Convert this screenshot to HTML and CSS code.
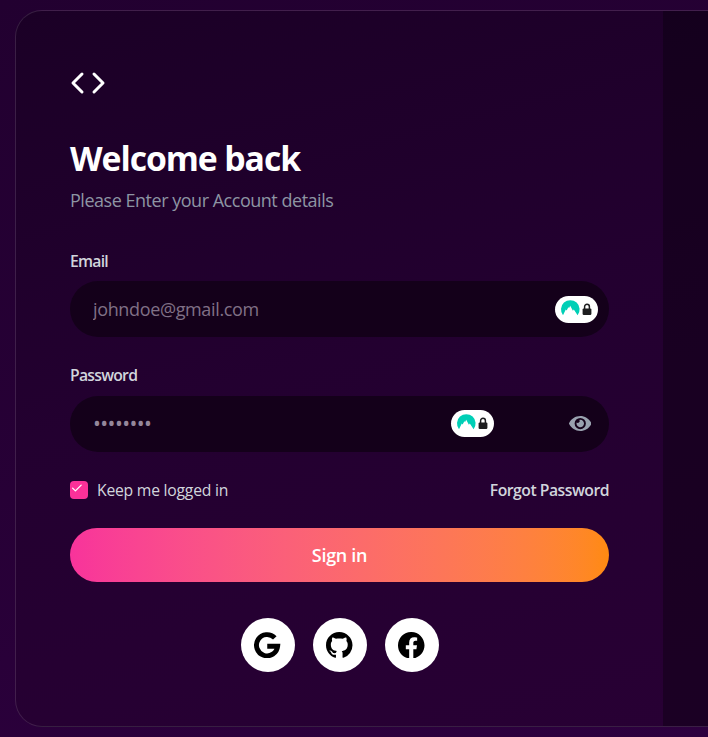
FILE: index.html
```html
<!DOCTYPE html>
<html lang="en">
<head>
<meta charset="utf-8">
<title>Sign in</title>
<link rel="stylesheet" href="styles.css">
</head>
<body>
<svg class="defs" aria-hidden="true">
  <symbol id="vault" viewBox="0 0 43 27">
    <path fill="#00cfb6" d="M8 19.2A9.3 9.3 0 1 1 22.6 19.2L18.8 13.4L17.9 14.8L15.2 9.8L14.1 12L13.4 11.2L11.6 14.4L10.8 13.6Z"/>
    <path fill="none" stroke="#1d1d1f" stroke-width="1.5" d="M29.6 13v-2.3a2.4 2.4 0 0 1 4.8 0V13"/>
    <rect x="27.6" y="12.4" width="8.8" height="6.6" rx="1.2" fill="#1d1d1f"/>
  </symbol>
</svg>
<main class="card">
  <section class="panel">
    <svg class="logo" viewBox="0 0 24 24" fill="none" stroke="#fff" stroke-width="2" stroke-linecap="round" stroke-linejoin="round"><path d="m8 6-6 6 6 6M16 6l6 6-6 6"/></svg>
    <h1 class="title">Welcome back</h1>
    <p class="subtitle">Please Enter your Account details</p>
    <form class="form">
      <label class="label" for="email">Email</label>
      <div class="field">
        <input class="input" id="email" type="email" placeholder="johndoe@gmail.com">
        <svg class="vault vault-email"><use href="#vault"/></svg>
      </div>
      <label class="label" for="password">Password</label>
      <div class="field">
        <input class="input input-dots" id="password" type="text" placeholder="••••••••">
        <svg class="vault vault-password"><use href="#vault"/></svg>
        <svg class="eye" viewBox="0 64 576 384" fill="#99a1af"><path d="M572.52 241.4C518.29 135.59 410.93 64 288 64S57.68 135.64 3.48 241.41a32.35 32.35 0 0 0 0 29.19C57.71 376.41 165.07 448 288 448s230.32-71.64 284.52-177.41a32.35 32.35 0 0 0 0-29.19zM288 400a144 144 0 1 1 144-144 143.93 143.93 0 0 1-144 144zm0-240a95.31 95.31 0 0 0-25.18 3.79 47.85 47.85 0 0 1-66.9 66.9A95.78 95.78 0 1 0 288 160z"/></svg>
      </div>
      <div class="options">
        <div class="keep">
          <span class="check"><svg viewBox="0 0 18 18" fill="none" stroke="#fff" stroke-width="1.3" stroke-linecap="round" stroke-linejoin="round"><path d="m2.6 7.1 2.8 2.8 5.8-5.8"/></svg></span>
          <span class="keep-text">Keep me logged in</span>
        </div>
        <a class="forgot">Forgot Password</a>
      </div>
      <button class="submit" type="button">Sign in</button>
    </form>
    <div class="social">
      <a class="circle"><svg viewBox="0 0 26 26"><path d="M20.4 5.8A10.4 10.4 0 1 0 23.2 14H13" fill="none" stroke="#000" stroke-width="4.8"/></svg></a>
      <a class="circle"><svg viewBox="0 0 16 16"><path d="M8 0C3.58 0 0 3.58 0 8c0 3.54 2.29 6.53 5.47 7.59.4.07.55-.17.55-.38 0-.19-.01-.82-.01-1.49-2.01.37-2.53-.49-2.69-.94-.09-.23-.48-.94-.82-1.13-.28-.15-.68-.52-.01-.53.63-.01 1.08.58 1.23.82.72 1.21 1.87.87 2.33.66.07-.52.28-.87.51-1.07-1.78-.2-3.64-.89-3.64-3.95 0-.87.31-1.59.82-2.15-.08-.2-.36-1.02.08-2.12 0 0 .67-.21 2.2.82.64-.18 1.32-.27 2-.27s1.36.09 2 .27c1.53-1.04 2.2-.82 2.2-.82.44 1.1.16 1.92.08 2.12.51.56.82 1.27.82 2.15 0 3.07-1.87 3.75-3.65 3.95.29.25.54.73.54 1.48 0 1.07-.01 1.93-.01 2.2 0 .21.15.46.55.38A8.01 8.01 0 0 0 16 8c0-4.42-3.58-8-8-8"/></svg></a>
      <a class="circle"><svg viewBox="0 0 16 16"><path d="M16 8.049c0-4.446-3.582-8.05-8-8.05C3.58 0-.002 3.603-.002 8.05c0 4.017 2.926 7.347 6.75 7.951v-5.625h-2.03V8.05H6.75V6.275c0-2.017 1.195-3.131 3.022-3.131.876 0 1.791.157 1.791.157v1.98h-1.009c-.993 0-1.303.621-1.303 1.258v1.51h2.218l-.354 2.326H9.25V16c3.824-.604 6.75-3.934 6.75-7.951"/></svg></a>
    </div>
  </section>
  <aside class="side"></aside>
</main>
</body>
</html>
```

FILE: styles.css
```css
* { box-sizing: border-box; margin: 0; padding: 0; }
html, body { height: 737px; overflow: hidden; }
body {
  padding: 10px 0 0 15px;
  font-family: "Open Sans", "Noto Sans", sans-serif;
  background: linear-gradient(160deg, #220030 0%, #270036 50%, #2d003f 100%);
}
.defs { position: absolute; width: 0; height: 0; }
.card {
  display: flex;
  height: 717px;
  border: 1px solid rgba(255, 255, 255, .12);
  border-right: 0;
  border-radius: 27px 0 0 27px;
  overflow: hidden;
  background: linear-gradient(165deg, #1b0026 0%, #230030 48%, #280034 100%);
}
.panel { flex: none; width: 647px; padding: 54px; }
.side { flex: 1; background: rgba(0, 0, 0, .3); }
.logo { display: block; width: 36px; height: 36px; margin-bottom: 36px; }
.title {
  margin-bottom: 9px;
  font-size: 33.75px;
  font-weight: 700;
  line-height: 43.5px;
  height: 40.5px;
  color: #fff;
  letter-spacing: -1.08px;
  white-space: nowrap;
}
.subtitle {
  margin-bottom: 36px;
  font-size: 18px;
  line-height: 27px;
  color: #8d95a3;
  letter-spacing: -.48px;
}
.label {
  display: block;
  margin-bottom: 9px;
  font-size: 15.75px;
  font-weight: 600;
  line-height: 22.5px;
  color: #d1d5dc;
  letter-spacing: -.75px;
}
.field { position: relative; height: 56px; margin-bottom: 27px; }
.field + .label + .field { margin-bottom: 26.5px; }
.input {
  display: block;
  width: 100%;
  height: 56px;
  padding: 0 23px;
  border: 0;
  border-radius: 28px;
  background: #14001a;
  font: 18px "Open Sans", "Noto Sans", sans-serif;
  letter-spacing: -.36px;
  color: #fff;
}
.input::placeholder { color: #807086; opacity: 1; }
.input-dots { padding-bottom: 1px; font-size: 21px; letter-spacing: -.6px; }
.input-dots::placeholder { color: #95869b; }
.vault {
  position: absolute;
  top: 15px;
  width: 43px;
  height: 27px;
  border-radius: 14px;
  background: #fff;
}
.vault-email { right: 11px; }
.vault-password { top: 14px; right: 115px; }
.eye { position: absolute; top: 20px; right: 18px; width: 22.5px; height: 15px; }
.options {
  display: flex;
  justify-content: space-between;
  align-items: center;
  height: 23px;
  margin-bottom: 27px;
  font-size: 15.75px;
  line-height: 22.5px;
  color: #d1d5dc;
}
.keep { display: flex; align-items: center; gap: 9px; }
.check { width: 18px; height: 18px; border-radius: 4px; background: #fb3199; }
.check svg { display: block; width: 18px; height: 18px; }
.keep-text { padding-top: 2px; letter-spacing: -.25px; }
.forgot { padding-top: 2px; font-weight: 600; letter-spacing: -.5px; }
.submit {
  display: block;
  width: 100%;
  height: 54px;
  margin-bottom: 36px;
  border: 0;
  border-radius: 27px;
  background: linear-gradient(90deg in oklab, #f8339b, #ff8a10);
  font: 600 18px "Open Sans", "Noto Sans", sans-serif;
  letter-spacing: -.3px;
  color: #fff;
}
.social { display: flex; justify-content: center; gap: 18px; }
.circle {
  display: flex;
  align-items: center;
  justify-content: center;
  width: 54px;
  height: 54px;
  border-radius: 50%;
  background: #fff;
}
.circle svg { width: 26.5px; height: 26.5px; }
```
